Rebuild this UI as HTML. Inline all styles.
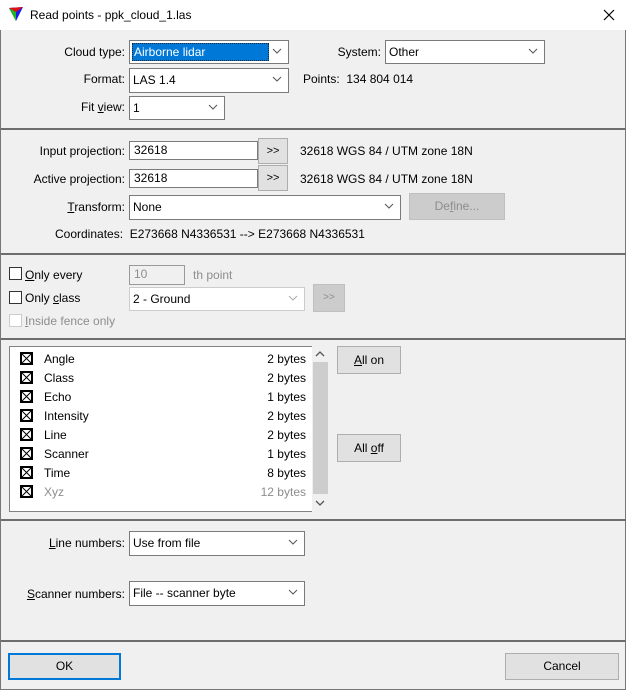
<!DOCTYPE html>
<html><head><meta charset="utf-8"><style>
*{box-sizing:border-box;margin:0;padding:0}
body{width:626px;height:690px;background:#f0f0f0;font-family:"Liberation Sans",sans-serif;font-size:12px;color:#000;position:relative;overflow:hidden}
.a{position:absolute;white-space:nowrap}
.lbl{position:absolute;white-space:nowrap;line-height:14px}
.r{text-align:right}
.combo{position:absolute;background:#fff;border:1px solid #7a7a7a}
.combo .t{position:absolute;left:3px;top:4px;line-height:14px}
.combo .arr{position:absolute;right:6px;top:6px;width:10px;height:8px}
.edit{position:absolute;background:#fff;border:1px solid #7a7a7a;padding-left:4px;line-height:16px}
.btn{position:absolute;background:#e1e1e1;border:1px solid #adadad;text-align:center}
.sep{position:absolute;left:1px;right:0;height:2px;background:#6d6d6d}
.cb{position:absolute;width:13px;height:13px;border:1px solid #333;background:#fff}
.g{color:#8d8d8d}
u{text-decoration:underline}
.item{position:absolute;left:20px;width:286px;height:16px}
.x{position:absolute;left:0;top:1px;width:13px;height:13px}
.nm{position:absolute;left:24px;top:1px}
.by{position:absolute;right:0;top:1px}
</style></head><body>
<div class="a" style="left:0;top:0;width:626px;height:30px;background:#fff"></div>
<div class="a" style="left:0;top:30px;width:1px;height:660px;background:#777"></div>
<div class="a" style="left:625px;top:30px;width:1px;height:660px;background:#777"></div>
<div class="a" style="left:0;top:689px;width:626px;height:1px;background:#777"></div>
<svg class="a" style="left:8px;top:6px" width="16" height="16" viewBox="0 0 16 16"><polygon points="1,2 15,1 8,15" fill="#1a1aee"/><polygon points="1,2 8,6 8,15" fill="#1fb81f"/><polygon points="1,2 15,1 8,6" fill="#e01010"/></svg>
<div class="a" style="left:30px;top:8px;font-size:12px">Read points - ppk_cloud_1.las</div>
<svg class="a" style="left:603px;top:9px" width="12" height="12"><path d="M1 1L11 11M11 1L1 11" stroke="#000" stroke-width="1.2"/></svg>

<div class="lbl r" style="left:20px;width:105px;top:45px">Cloud type:</div>
<div class="combo" style="left:129px;top:40px;width:160px;height:24px"><div class="a" style="left:2px;top:2px;width:137px;height:18px;background:#0078d7;border:1px dotted #222"></div><div class="t" style="color:#fff;left:4px">Airborne lidar</div><svg class="arr" viewBox="0 0 10 8"><path d="M1 2L5 6L9 2" fill="none" stroke="#555"/></svg></div>
<div class="lbl r" style="left:300px;width:81px;top:45px">System:</div>
<div class="combo" style="left:385px;top:40px;width:160px;height:24px"><div class="t">Other</div><svg class="arr" viewBox="0 0 10 8"><path d="M1 2L5 6L9 2" fill="none" stroke="#555"/></svg></div>
<div class="lbl r" style="left:20px;width:105px;top:72px">Format:</div>
<div class="combo" style="left:129px;top:68px;width:160px;height:25px"><div class="t">LAS 1.4</div><svg class="arr" viewBox="0 0 10 8"><path d="M1 2L5 6L9 2" fill="none" stroke="#555"/></svg></div>
<div class="lbl" style="left:303px;top:72px">Points:&nbsp; 134 804 014</div>
<div class="lbl r" style="left:20px;width:105px;top:100px">Fit <u>v</u>iew:</div>
<div class="combo" style="left:129px;top:96px;width:96px;height:24px"><div class="t">1</div><svg class="arr" viewBox="0 0 10 8"><path d="M1 2L5 6L9 2" fill="none" stroke="#555"/></svg></div>

<div class="sep" style="top:128px"></div>

<div class="lbl r" style="left:10px;width:115px;top:144px">Input projection:</div>
<div class="edit" style="left:129px;top:141px;width:129px;height:19px">32618</div>
<div class="btn" style="left:258px;top:138px;width:30px;height:26px;line-height:24px;font-size:11px">&gt;&gt;</div>
<div class="lbl" style="left:300px;top:144px">32618 WGS 84 / UTM zone 18N</div>
<div class="lbl r" style="left:10px;width:115px;top:172px">Active projection:</div>
<div class="edit" style="left:129px;top:169px;width:129px;height:19px">32618</div>
<div class="btn" style="left:258px;top:165px;width:30px;height:26px;line-height:24px;font-size:11px">&gt;&gt;</div>
<div class="lbl" style="left:300px;top:172px">32618 WGS 84 / UTM zone 18N</div>
<div class="lbl r" style="left:10px;width:115px;top:200px"><u>T</u>ransform:</div>
<div class="combo" style="left:129px;top:195px;width:272px;height:25px"><div class="t">None</div><svg class="arr" viewBox="0 0 10 8"><path d="M1 2L5 6L9 2" fill="none" stroke="#555"/></svg></div>
<div class="btn g" style="left:409px;top:193px;width:96px;height:27px;line-height:25px;background:#ccc;border-color:#bfbfbf">De<u>f</u>ine...</div>
<div class="lbl" style="left:55px;top:227px">Coordinates:&nbsp; E273668 N4336531 --&gt; E273668 N4336531</div>

<div class="sep" style="top:253px"></div>

<div class="cb" style="left:9px;top:267px"></div>
<div class="lbl" style="left:25px;top:268px"><u>O</u>nly every</div>
<div class="edit g" style="left:129px;top:265px;width:56px;height:20px;background:#f0f0f0;border-color:#999">10</div>
<div class="lbl g" style="left:193px;top:268px">th point</div>
<div class="cb" style="left:9px;top:291px"></div>
<div class="lbl" style="left:25px;top:291px">Only <u>c</u>lass</div>
<div class="combo" style="left:129px;top:287px;width:176px;height:24px;border-color:#ccc"><div class="t">2 - Ground</div><svg class="arr" viewBox="0 0 10 8"><path d="M1 2L5 6L9 2" fill="none" stroke="#aaa"/></svg></div>
<div class="btn g" style="left:313px;top:284px;width:32px;height:28px;line-height:26px;background:#ccc;border-color:#bfbfbf;font-size:10px">&gt;&gt;</div>
<div class="cb" style="left:9px;top:314px;border-color:#ccc"></div>
<div class="lbl g" style="left:25px;top:314px"><u>I</u>nside fence only</div>

<div class="sep" style="top:338px"></div>

<div class="a" style="left:9px;top:346px;width:304px;height:166px;background:#fff;border:1px solid #828282;border-right:none"></div>
<div class="a" style="left:312px;top:346px;width:17px;height:166px;background:#f0f0f0"></div>
<div class="a" style="left:313px;top:362px;width:15px;height:132px;background:#cdcdcd"></div>
<svg class="a" style="left:315px;top:350px" width="10" height="8"><path d="M1 6L5 2L9 6" fill="none" stroke="#555" stroke-width="1.3"/></svg>
<svg class="a" style="left:315px;top:499px" width="10" height="8"><path d="M1 2L5 6L9 2" fill="none" stroke="#555" stroke-width="1.3"/></svg>
<div class="item" style="top:351px"><svg class="x" viewBox="0 0 13 13"><rect x="0.5" y="0.5" width="12" height="12" fill="#fff" stroke="#000"/><rect x="1.5" y="1.5" width="10" height="10" fill="none" stroke="#000"/><path d="M2 2L11 11M11 2L2 11" stroke="#000"/></svg><span class="nm">Angle</span><span class="by">2 bytes</span></div>
<div class="item" style="top:370px"><svg class="x" viewBox="0 0 13 13"><rect x="0.5" y="0.5" width="12" height="12" fill="#fff" stroke="#000"/><rect x="1.5" y="1.5" width="10" height="10" fill="none" stroke="#000"/><path d="M2 2L11 11M11 2L2 11" stroke="#000"/></svg><span class="nm">Class</span><span class="by">2 bytes</span></div>
<div class="item" style="top:389px"><svg class="x" viewBox="0 0 13 13"><rect x="0.5" y="0.5" width="12" height="12" fill="#fff" stroke="#000"/><rect x="1.5" y="1.5" width="10" height="10" fill="none" stroke="#000"/><path d="M2 2L11 11M11 2L2 11" stroke="#000"/></svg><span class="nm">Echo</span><span class="by">1 bytes</span></div>
<div class="item" style="top:408px"><svg class="x" viewBox="0 0 13 13"><rect x="0.5" y="0.5" width="12" height="12" fill="#fff" stroke="#000"/><rect x="1.5" y="1.5" width="10" height="10" fill="none" stroke="#000"/><path d="M2 2L11 11M11 2L2 11" stroke="#000"/></svg><span class="nm">Intensity</span><span class="by">2 bytes</span></div>
<div class="item" style="top:427px"><svg class="x" viewBox="0 0 13 13"><rect x="0.5" y="0.5" width="12" height="12" fill="#fff" stroke="#000"/><rect x="1.5" y="1.5" width="10" height="10" fill="none" stroke="#000"/><path d="M2 2L11 11M11 2L2 11" stroke="#000"/></svg><span class="nm">Line</span><span class="by">2 bytes</span></div>
<div class="item" style="top:446px"><svg class="x" viewBox="0 0 13 13"><rect x="0.5" y="0.5" width="12" height="12" fill="#fff" stroke="#000"/><rect x="1.5" y="1.5" width="10" height="10" fill="none" stroke="#000"/><path d="M2 2L11 11M11 2L2 11" stroke="#000"/></svg><span class="nm">Scanner</span><span class="by">1 bytes</span></div>
<div class="item" style="top:465px"><svg class="x" viewBox="0 0 13 13"><rect x="0.5" y="0.5" width="12" height="12" fill="#fff" stroke="#000"/><rect x="1.5" y="1.5" width="10" height="10" fill="none" stroke="#000"/><path d="M2 2L11 11M11 2L2 11" stroke="#000"/></svg><span class="nm">Time</span><span class="by">8 bytes</span></div>
<div class="item g" style="top:484px"><svg class="x" viewBox="0 0 13 13"><rect x="0.5" y="0.5" width="12" height="12" fill="#fff" stroke="#000"/><rect x="1.5" y="1.5" width="10" height="10" fill="none" stroke="#000"/><path d="M2 2L11 11M11 2L2 11" stroke="#000"/></svg><span class="nm">Xyz</span><span class="by">12 bytes</span></div>
<div class="btn" style="left:337px;top:346px;width:64px;height:28px;line-height:26px"><u>A</u>ll on</div>
<div class="btn" style="left:337px;top:434px;width:64px;height:28px;line-height:26px">All <u>o</u>ff</div>

<div class="sep" style="top:519px"></div>

<div class="lbl r" style="left:10px;width:115px;top:536px"><u>L</u>ine numbers:</div>
<div class="combo" style="left:129px;top:531px;width:176px;height:25px"><div class="t">Use from file</div><svg class="arr" viewBox="0 0 10 8"><path d="M1 2L5 6L9 2" fill="none" stroke="#555"/></svg></div>
<div class="lbl r" style="left:10px;width:115px;top:587px"><u>S</u>canner numbers:</div>
<div class="combo" style="left:129px;top:581px;width:176px;height:25px"><div class="t">File -- scanner byte</div><svg class="arr" viewBox="0 0 10 8"><path d="M1 2L5 6L9 2" fill="none" stroke="#555"/></svg></div>

<div class="sep" style="top:640px"></div>

<div class="btn" style="left:8px;top:653px;width:113px;height:27px;line-height:23px;border:2px solid #0078d7">OK</div>
<div class="btn" style="left:505px;top:653px;width:114px;height:27px;line-height:25px">Cancel</div>
</body></html>
